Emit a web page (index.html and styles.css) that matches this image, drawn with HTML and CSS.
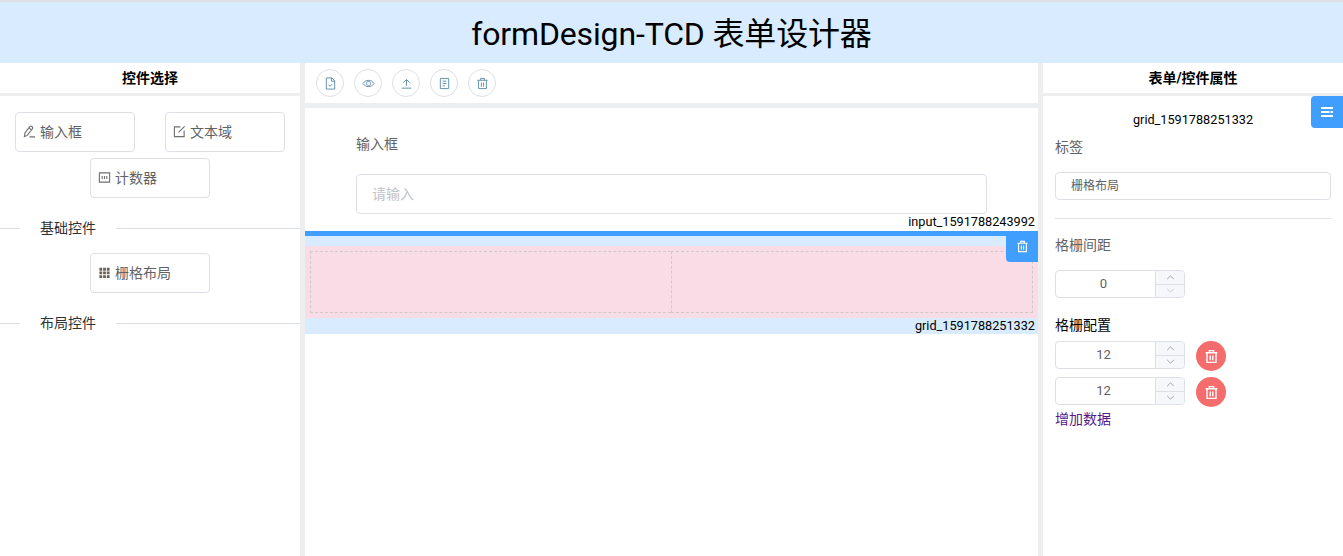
FILE: index.html
```html
<!DOCTYPE html>
<html>
<head>
    <title>formDesign-TCD</title>
    <link rel="stylesheet" href="styles.css">
</head>
<body>
    <h1 class="title">formDesign-TCD 表单设计器</h1>
    <div class="main">
        <div class="panel">
            <div class="panel-head">控件选择</div>
            <div class="widgets">
                <div class="widget">
                    <svg class="ico" viewBox="0 0 14 14"><path d="M1.500 12.500l.6-4L7.500 1.600c.6-.6 1.400-.6 2 0l.5.5c.6.6.6 1.400 0 2L4.600 11.200z M6.500 3l2.800 2.600 M7 12.800h6"/></svg>
                    <span>输入框</span>
                </div>
                <div class="widget">
                    <svg class="ico" viewBox="0 0 14 14"><path d="M8 2H1.500v10.500H12V6 M6 8l6.500-6.500"/></svg>
                    <span>文本域</span>
                </div>
                <div class="widget">
                    <svg class="ico" viewBox="0 0 14 14"><path d="M1.500 2h11v10h-11z M4.500 5.500v3 M7 5.500v3 M9.500 5.500v3"/></svg>
                    <span>计数器</span>
                </div>
            </div>
            <div class="divider"><span>基础控件</span></div>
            <div class="widgets">
                <div class="widget">
                    <svg class="ico ico-fill" viewBox="0 0 14 14"><path d="M1.500 2h3v3h-3z M5.500 2h3v3h-3z M9.500 2h3v3h-3z M1.500 6h3v3h-3z M5.500 6h3v3h-3z M9.500 6h3v3h-3z M1.500 10h3v3h-3z M5.500 10h3v3h-3z M9.500 10h3v3h-3z"/></svg>
                    <span>栅格布局</span>
                </div>
            </div>
            <div class="divider"><span>布局控件</span></div>
        </div>

        <div class="center">
            <div class="toolbar">
                <div class="tool"><svg viewBox="0 0 14 14"><path d="M2.500 1h6l3 3v9h-9z M8 1v3.500h3.500 M5 8.500l1.500 1.500L9 7.500"/></svg></div>
                <div class="tool"><svg viewBox="0 0 14 14"><path d="M1 7c3-4.500 9-4.500 12 0-3 4.500-9 4.500-12 0z M7 4.800a2.200 2.200 0 1 0 .01 0z"/></svg></div>
                <div class="tool"><svg viewBox="0 0 14 14"><path d="M3.500 6L7 2.800 10.500 6 M7 3v6.500 M1.800 12h10.400"/></svg></div>
                <div class="tool"><svg viewBox="0 0 14 14"><path d="M2.500 1.500h9v11h-9z M5 4.500h4 M5 7h4 M5 9.500h2.500"/></svg></div>
                <div class="tool"><svg viewBox="0 0 14 14"><path d="M1.500 3.500h11 M5 3.500V1.500h4v2 M2.800 3.500v9h8.400v-9 M5.800 6v4.500 M8.200 6v4.500"/></svg></div>
            </div>
            <div class="canvas">
                <div class="form-item">
                    <div class="form-label">输入框</div>
                    <div class="fake-input">请输入</div>
                </div>
                <div class="item-id">input_1591788243992</div>
                <div class="grid-item">
                    <div class="grid-delete"><svg viewBox="0 0 14 14"><path d="M1.500 3.500h11 M5 3.500V1.500h4v2 M2.800 3.500v9h8.400v-9 M5.800 6v4.500 M8.200 6v4.500"/></svg></div>
                    <div class="grid-row">
                        <div class="grid-cell"></div>
                        <div class="grid-cell cell-last"></div>
                    </div>
                    <div class="item-id grid-id">grid_1591788251332</div>
                </div>
            </div>
        </div>

        <div class="panel right">
            <div class="panel-head">表单/控件属性</div>
            <div class="menu-btn"><svg viewBox="0 0 14 14"><path d="M1 2h12v2h-12z M1 6h8.500v2H1z M10.500 6H13v2h-2.500z M1 10h12v2H1z"/></svg></div>
            <div class="props">
                <div class="prop-id">grid_1591788251332</div>
                <div class="prop-label">标签</div>
                <div class="text-box">栅格布局</div>
                <div class="prop-line"></div>
                <div class="prop-label gap-label">格栅间距</div>
                <div class="stepper gap-stepper">
                    <div class="step-value">0</div>
                    <div class="step-btns">
                        <div class="step-btn"><svg viewBox="0 0 10 6"><path d="M1 5l4-4 4 4"/></svg></div>
                        <div class="step-btn off"><svg viewBox="0 0 10 6"><path d="M1 1l4 4 4-4"/></svg></div>
                    </div>
                </div>
                <div class="config-title">格栅配置</div>
                <div class="config-row">
                    <div class="stepper">
                        <div class="step-value">12</div>
                        <div class="step-btns">
                            <div class="step-btn"><svg viewBox="0 0 10 6"><path d="M1 5l4-4 4 4"/></svg></div>
                            <div class="step-btn"><svg viewBox="0 0 10 6"><path d="M1 1l4 4 4-4"/></svg></div>
                        </div>
                    </div>
                    <div class="round-del"><svg viewBox="0 0 14 14"><path d="M1.500 3.500h11 M5 3.500V1.500h4v2 M2.800 3.500v9h8.400v-9 M5.800 6v4.500 M8.200 6v4.500"/></svg></div>
                </div>
                <div class="config-row">
                    <div class="stepper">
                        <div class="step-value">12</div>
                        <div class="step-btns">
                            <div class="step-btn"><svg viewBox="0 0 10 6"><path d="M1 5l4-4 4 4"/></svg></div>
                            <div class="step-btn"><svg viewBox="0 0 10 6"><path d="M1 1l4 4 4-4"/></svg></div>
                        </div>
                    </div>
                    <div class="round-del"><svg viewBox="0 0 14 14"><path d="M1.500 3.500h11 M5 3.500V1.500h4v2 M2.800 3.500v9h8.400v-9 M5.800 6v4.500 M8.200 6v4.500"/></svg></div>
                </div>
                <div class="add-link">增加数据</div>
            </div>
        </div>
    </div>
</body>
</html>
```

FILE: styles.css
```css
* {
    box-sizing: border-box;
}
html, body {
    height: 100%;
}
body {
    margin: 0;
    font-family: Roboto, "Noto Sans CJK SC", sans-serif;
    font-size: 14px;
    color: #606266;
    background-color: #fff;
    border-top: 2px solid #dcdfe6;
    overflow: hidden;
}
svg {
    fill: none;
    stroke: currentColor;
    stroke-width: 1.2;
}
.title {
    margin: 0;
    height: 61px;
    line-height: 65px;
    text-align: center;
    font-size: 32px;
    font-weight: normal;
    letter-spacing: -.15px;
    color: #000;
    background-color: #d9ecff;
}
.main {
    display: grid;
    grid-template-columns: 300px 1fr 300px;
    column-gap: 5px;
    height: 493px;
    background-color: #edeef0;
}
.panel {
    position: relative;
    background-color: #fff;
}
.panel-head {
    height: 33px;
    line-height: 30px;
    text-align: center;
    font-size: 14px;
    font-weight: bold;
    color: #000;
    border-bottom: 3px solid #eee;
}

/* left */
.widgets {
    display: flex;
    flex-wrap: wrap;
    justify-content: space-around;
    padding-top: 13px;
}
.widgets + .divider {
    margin-top: 27px;
}
.widget {
    display: flex;
    align-items: center;
    width: 120px;
    height: 40px;
    margin-top: 3px;
    margin-bottom: 3px;
    padding: 0 0 2px 7px;
    border: 1px solid #dcdfe6;
    border-radius: 4px;
}
.ico {
    width: 13px;
    height: 13px;
    margin-right: 4px;
    stroke: #6f6f6f;
}
.ico-fill {
    fill: #6b5f5a;
    stroke: none;
}
.divider {
    position: relative;
    height: 1px;
    background-color: #dcdfe6;
}
.divider span {
    position: absolute;
    left: 20px;
    top: -10px;
    padding: 0 20px;
    line-height: 20px;
    color: #303133;
    font-size: 14px;
    background-color: #fff;
}
.divider + .widgets {
    padding-top: 21px;
}

/* center */
.center {
    display: flex;
    flex-direction: column;
    row-gap: 5px;
}
.toolbar {
    display: flex;
    align-items: flex-start;
    column-gap: 10px;
    height: 40px;
    padding: 6px 11px;
    background-color: #fff;
}
.tool {
    display: flex;
    justify-content: center;
    align-items: center;
    width: 28px;
    height: 28px;
    border: 1px solid #dcdfe6;
    border-radius: 50%;
    color: #5a8aa8;
}
.tool svg {
    width: 13px;
    height: 13px;
    stroke-width: 1;
}
.canvas {
    flex: 1;
    background-color: #fff;
}
.form-item {
    padding: 26px 51px 0;
}
.form-label {
    height: 20px;
    line-height: 20px;
    margin-bottom: 20px;
    font-size: 14px;
}
.fake-input {
    height: 40px;
    line-height: 38px;
    padding-left: 15px;
    color: #c0c4cc;
    border: 1px solid #dcdfe6;
    border-radius: 4px;
}
.item-id {
    height: 17px;
    line-height: 16px;
    padding-right: 3px;
    text-align: right;
    font-size: 12.7px;
    color: #000;
}
.grid-item {
    position: relative;
    padding-top: 10px;
    border-top: 5px solid #409eff;
    background-color: #d9ecff;
}
.grid-delete {
    position: absolute;
    top: -5px;
    right: 0;
    display: flex;
    justify-content: center;
    align-items: center;
    width: 32px;
    height: 31px;
    color: #fff;
    background-color: #409eff;
    border-bottom-left-radius: 4px;
}
.grid-delete svg {
    width: 13px;
    height: 13px;
}
.grid-row {
    display: flex;
    padding: 5px;
    background-color: #f9dce6;
}
.grid-cell {
    flex: 1;
    height: 62px;
    border: 1px dashed #ccc;
    border-right: 0;
}
.cell-last {
    border-right: 1px dashed #ccc;
}
.grid-id {
    height: 16px;
    line-height: 16px;
}

/* right */
.menu-btn {
    position: absolute;
    top: 33px;
    right: 0;
    display: flex;
    justify-content: center;
    align-items: center;
    width: 32px;
    height: 32px;
    background-color: #409eff;
    border-radius: 4px 0 0 4px;
}
.menu-btn svg {
    width: 14px;
    height: 14px;
    fill: #fff;
    stroke: none;
}
.props {
    padding: 14px 12px 0;
}
.prop-id {
    height: 20px;
    line-height: 20px;
    text-align: center;
    font-size: 12.7px;
    color: #000;
}
.prop-label {
    height: 20px;
    line-height: 20px;
    margin-top: 7px;
    font-size: 14px;
}
.text-box {
    height: 28px;
    line-height: 26px;
    margin-top: 15px;
    padding-left: 15px;
    font-size: 12px;
    border: 1px solid #dcdfe6;
    border-radius: 4px;
}
.prop-line {
    height: 1px;
    margin-top: 18px;
    background-color: #dcdfe6;
}
.gap-label {
    margin-top: 16px;
}
.stepper {
    display: flex;
    width: 130px;
    height: 28px;
    border: 1px solid #dcdfe6;
    border-radius: 4px;
    overflow: hidden;
}
.gap-stepper {
    margin-top: 15px;
}
.step-value {
    flex: 1;
    padding-right: 4px;
    line-height: 26px;
    text-align: center;
    font-size: 13px;
}
.step-btns {
    display: flex;
    flex-direction: column;
    width: 29px;
    border-left: 1px solid #dcdfe6;
    background-color: #f5f7fa;
}
.step-btn {
    flex: 1;
    display: flex;
    justify-content: center;
    align-items: center;
    color: #909399;
}
.step-btn + .step-btn {
    border-top: 1px solid #dcdfe6;
}
.step-btn.off {
    color: #c0c4cc;
}
.step-btn svg {
    width: 9px;
    height: 5px;
    stroke-width: 1;
}
.config-title {
    height: 20px;
    line-height: 20px;
    margin-top: 17px;
    font-size: 14px;
    color: #000;
}
.config-row {
    display: flex;
    align-items: flex-start;
    column-gap: 11px;
    height: 30px;
    margin-top: 6px;
}
.round-del {
    display: flex;
    justify-content: center;
    align-items: center;
    width: 30px;
    height: 30px;
    border-radius: 50%;
    color: #fff;
    background-color: #f56c6c;
}
.round-del svg {
    width: 15px;
    height: 15px;
    stroke-width: 1.3;
}
.add-link {
    line-height: 20px;
    margin-top: 2px;
    font-size: 14px;
    color: #551a8b;
}
```
